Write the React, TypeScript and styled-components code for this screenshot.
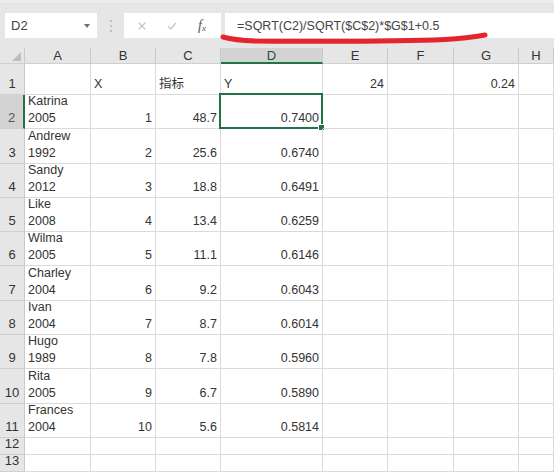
import React from "react";
import styled, { createGlobalStyle } from "styled-components";

const GlobalStyle = createGlobalStyle`
	html, body {
		margin: 0;
		padding: 0;
		background: #ffffff;
		overflow: hidden;
	}
	body {
		font-family: "Liberation Sans", Arial, "Noto Sans CJK SC", sans-serif;
		color: #333333;
	}
`;

interface RowData {
	name: string;
	year: string;
	x: string;
	c: string;
	y: string;
}

const rows: RowData[] = [
	{ name: "Katrina", year: "2005", x: "1", c: "48.7", y: "0.7400" },
	{ name: "Andrew", year: "1992", x: "2", c: "25.6", y: "0.6740" },
	{ name: "Sandy", year: "2012", x: "3", c: "18.8", y: "0.6491" },
	{ name: "Like", year: "2008", x: "4", c: "13.4", y: "0.6259" },
	{ name: "Wilma", year: "2005", x: "5", c: "11.1", y: "0.6146" },
	{ name: "Charley", year: "2004", x: "6", c: "9.2", y: "0.6043" },
	{ name: "Ivan", year: "2004", x: "7", c: "8.7", y: "0.6014" },
	{ name: "Hugo", year: "1989", x: "8", c: "7.8", y: "0.5960" },
	{ name: "Rita", year: "2005", x: "9", c: "6.7", y: "0.5890" },
	{ name: "Frances", year: "2004", x: "10", c: "5.6", y: "0.5814" },
];

const columns = ["A", "B", "C", "D", "E", "F", "G", "H"];

export default function App() {
	return (
		<Page>
			<GlobalStyle />
			<FormulaBar>
				<NameBox>
					<NameText>D2</NameText>
					<DropArrow />
				</NameBox>
				<Dots>
					<span />
					<span />
					<span />
				</Dots>
				<FxBox>
					<ToolIcon viewBox="0 0 12 12">
						<path d="M2 2 L10 10 M10 2 L2 10" stroke="#b9b9b9" strokeWidth="1.3" fill="none" />
					</ToolIcon>
					<ToolIcon viewBox="0 0 12 12">
						<path d="M1.5 6.5 L4.5 9.5 L10.5 2.5" stroke="#b9b9b9" strokeWidth="1.3" fill="none" />
					</ToolIcon>
					<FxLabel>
						<i>f</i>
						<sub>x</sub>
					</FxLabel>
				</FxBox>
				<FormulaInput>=SQRT(C2)/SQRT($C$2)*$G$1+0.5</FormulaInput>
			</FormulaBar>
			{/* red pen mark drawn over the screenshot */}
			<Squiggle viewBox="0 0 270 16" width="270" height="16">
				<path
					d="M3 8 C 10 10, 20 11.5, 35 12 C 100 12.5, 180 12.5, 225 10.5 C 245 9.5, 257 7.5, 265 6"
					stroke="#e4262c"
					strokeWidth="5"
					strokeLinecap="round"
					fill="none"
				/>
			</Squiggle>

			<Sheet>
				<Corner>
					<CornerTriangle />
				</Corner>
				{columns.map((col) => (
					<ColHeader key={col} $active={col === "D"}>
						{col}
					</ColHeader>
				))}

				<RowHeader>1</RowHeader>
				<Cell />
				<Cell>X</Cell>
				<Cell>指标</Cell>
				<Cell>Y</Cell>
				<Cell $right>24</Cell>
				<Cell />
				<Cell $right>0.24</Cell>
				<Cell />

				{rows.map((r, i) => (
					<React.Fragment key={r.name}>
						<RowHeader $active={i === 0}>{i + 2}</RowHeader>
						<Cell>
							<span>{r.name}</span>
							<span>{r.year}</span>
						</Cell>
						<Cell $right>{r.x}</Cell>
						<Cell $right>{r.c}</Cell>
						<Cell $right>
							{r.y}
							{i === 0 && (
								<Selection>
									<FillHandle />
								</Selection>
							)}
						</Cell>
						<Cell />
						<Cell />
						<Cell />
						<Cell />
					</React.Fragment>
				))}

				{[12, 13].map((n) => (
					<React.Fragment key={n}>
						<RowHeader>{n}</RowHeader>
						{columns.map((c) => (
							<Cell key={c} />
						))}
					</React.Fragment>
				))}
			</Sheet>
		</Page>
	);
}

const Page = styled.div`
	position: relative;
	width: 554px;
	height: 474px;
	overflow: hidden;
	background: #ffffff;
`;

const FormulaBar = styled.div`
	display: flex;
	align-items: center;
	height: 48px;
	box-sizing: border-box;
	padding: 0 0 0 5px;
	background: #e6e6e6;
	border-top: 3px solid #ededed;
`;

const NameBox = styled.div`
	display: flex;
	align-items: center;
	justify-content: space-between;
	width: 92px;
	height: 25px;
	box-sizing: border-box;
	padding: 0 7px 0 6px;
	background: #ffffff;
`;

const NameText = styled.span`
	font-size: 13px;
	color: #444444;
`;

const DropArrow = styled.span`
	width: 0;
	height: 0;
	border-left: 3.5px solid transparent;
	border-right: 3.5px solid transparent;
	border-top: 4px solid #707070;
`;

const Dots = styled.div`
	display: flex;
	flex-direction: column;
	gap: 3px;
	width: 27px;
	align-items: center;

	span {
		width: 2px;
		height: 2px;
		border-radius: 50%;
		background: #b0b0b0;
	}
`;

const FxBox = styled.div`
	display: flex;
	align-items: center;
	width: 97px;
	height: 25px;
	box-sizing: border-box;
	padding: 0 8px 0 13px;
	gap: 20px;
	background: #ffffff;
`;

const ToolIcon = styled.svg`
	width: 10px;
	height: 10px;
	flex: none;
`;

const FxLabel = styled.span`
	margin-left: 1px;
	font-family: "Liberation Serif", "Times New Roman", serif;
	font-size: 14px;
	color: #555555;
	line-height: 1;

	i {
		font-style: italic;
	}

	sub {
		font-style: italic;
		font-size: 9px;
		vertical-align: -1px;
	}
`;

const FormulaInput = styled.div`
	flex: 1;
	display: flex;
	align-items: center;
	height: 25px;
	margin-left: 4px;
	padding-left: 12px;
	background: #ffffff;
	font-size: 12.5px;
	color: #444444;
	white-space: nowrap;
`;

const Squiggle = styled.svg`
	position: absolute;
	left: 220px;
	top: 29px;
	pointer-events: none;
`;

const Sheet = styled.div`
	display: grid;
	grid-template-columns: 25px 66px 65px 65px 102px 65px 66px 65px 1fr;
	grid-template-rows: 16px 31px repeat(10, 34.3px) 17px 17px;
	font-size: 12.5px;
	color: #333333;
`;

const Corner = styled.div`
	position: relative;
	background: #e6e6e6;
	border-right: 1px solid #c9c9c9;
	border-bottom: 1px solid #d0d0d0;
`;

const CornerTriangle = styled.span`
	position: absolute;
	right: 3px;
	bottom: 2px;
	width: 0;
	height: 0;
	border-left: 9px solid transparent;
	border-bottom: 9px solid #bdbdbd;
`;

const ColHeader = styled.div<{ $active?: boolean }>`
	display: flex;
	align-items: center;
	justify-content: center;
	background: ${({ $active }) => ($active ? "#d3d3d3" : "#e6e6e6")};
	border-right: 1px solid #c9c9c9;
	border-bottom: ${({ $active }) => ($active ? "2px solid #217346" : "1px solid #d0d0d0")};
	color: ${({ $active }) => ($active ? "#1f4f34" : "#333333")};
	font-size: 13px;
	box-sizing: border-box;
`;

const RowHeader = styled.div<{ $active?: boolean }>`
	display: flex;
	align-items: flex-end;
	justify-content: center;
	padding-bottom: 2px;
	box-sizing: border-box;
	background: ${({ $active }) => ($active ? "#d3d3d3" : "#e6e6e6")};
	border-right: ${({ $active }) => ($active ? "2px solid #217346" : "1px solid #c9c9c9")};
	border-bottom: 1px solid #d0d0d0;
	color: ${({ $active }) => ($active ? "#555555" : "#333333")};
	font-size: 13px;
	line-height: 17px;
`;

const Cell = styled.div<{ $right?: boolean }>`
	position: relative;
	display: flex;
	flex-direction: column;
	justify-content: flex-end;
	align-items: ${({ $right }) => ($right ? "flex-end" : "flex-start")};
	padding: 0 3px 1px 3px;
	box-sizing: border-box;
	border-right: 1px solid #dadada;
	border-bottom: 1px solid #dadada;
	line-height: 17px;
	white-space: nowrap;
	min-width: 0;
`;

const Selection = styled.div`
	position: absolute;
	left: -2px;
	top: -2px;
	right: -1px;
	bottom: -1px;
	border: 2px solid #217346;
	pointer-events: none;
`;

const FillHandle = styled.span`
	position: absolute;
	right: -4px;
	bottom: -4px;
	width: 5px;
	height: 5px;
	background: #217346;
	border: 1px solid #ffffff;
`;
